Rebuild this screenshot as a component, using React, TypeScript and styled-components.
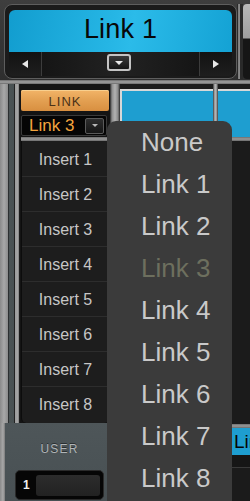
import React from "react";
import styled, { createGlobalStyle } from "styled-components";

const Global = createGlobalStyle`
  html, body { margin: 0; padding: 0; background: #2a2a2a; }
  body { font-family: "Liberation Sans", Arial, sans-serif; }
  * { box-sizing: border-box; }
`;

const Screen = styled.div`
  position: relative;
  width: 250px;
  height: 501px;
  overflow: hidden;
  background: #2a2a2a;
  display: flex;
  flex-direction: column;
`;

const Header = styled.div`
  height: 80px;
  flex: none;
  display: flex;
  padding: 4px 0 0 4px;
  background: linear-gradient(#3e3e3e, #2e2e2e);
`;

const DisplayFrame = styled.div`
  width: 233px;
  height: 75px;
  border: 1px solid #5e5e5e;
  border-radius: 8px;
  background: #1b1b1b;
  padding: 5px 4px 2px 4px;
  display: flex;
  flex-direction: column;
`;

const Lcd = styled.div`
  height: 42px;
  border-radius: 6px 6px 0 0;
  background: linear-gradient(100deg, #129dcf 0%, #25b5e4 45%, #2bbbe9 55%, #14a2d4 100%);
  display: flex;
  align-items: center;
  justify-content: center;
  padding-bottom: 4px;
  font-size: 27px;
  color: #080808;
  letter-spacing: 0.2px;
`;

const NavBar = styled.div`
  height: 24px;
  display: flex;
  background: linear-gradient(#121212, #1e1e1e);
  border-radius: 0 0 4px 4px;
`;

const NavSide = styled.div`
  width: 32px;
  display: flex;
  align-items: center;
  justify-content: center;
`;

const NavCenter = styled.div`
  flex: 1;
  border-left: 1px solid #3c3c3c;
  border-right: 1px solid #3c3c3c;
  display: flex;
  align-items: flex-start;
  justify-content: center;
  padding-top: 2px;
  padding-right: 4px;
  background: linear-gradient(90deg, #151515, #222 50%, #151515);
`;

const Tri = styled.div<{ $dir: "left" | "right" | "down"; $size?: number; $color?: string }>`
  width: 0;
  height: 0;
  ${({ $dir, $size = 4, $color = "#e8e8e8" }) =>
    $dir === "left"
      ? `border-top: ${$size}px solid transparent; border-bottom: ${$size}px solid transparent; border-right: ${$size + 2}px solid ${$color};`
      : $dir === "right"
      ? `border-top: ${$size}px solid transparent; border-bottom: ${$size}px solid transparent; border-left: ${$size + 2}px solid ${$color};`
      : `border-left: ${$size}px solid transparent; border-right: ${$size}px solid transparent; border-top: ${$size}px solid ${$color};`}
`;

const MenuButton = styled.div`
  width: 24px;
  height: 17px;
  border: 2px solid #c4c4c4;
  border-radius: 3px;
  background: linear-gradient(#3a3a3a, #161616);
  display: flex;
  align-items: center;
  justify-content: center;
  padding-top: 1px;
`;

const HeaderSep = styled.div`
  width: 6px;
  height: 75px;
  background: linear-gradient(90deg, #2a2a2a 0, #2a2a2a 1px, #7a7a7a 1px, #8c8c8c 3px, #2a2a2a 3px);
`;

const Peek = styled.div`
  flex: 1;
  height: 75px;
  border-radius: 4px 0 0 4px;
  background: linear-gradient(#b8b8b8 0, #9e9e9e 34px, #161616 35px, #161616 100%);
`;

const Rule = styled.div`
  height: 4px;
  flex: none;
  background: linear-gradient(#6a6a6a, #a2a2a2 50%, #6a6a6a);
`;

const Body = styled.div`
  flex: 1;
  display: flex;
  min-height: 0;
`;

const LeftSide = styled.div`
  width: 110px;
  display: flex;
  flex-direction: column;
`;

const UpperLeft = styled.div`
  height: 339px;
  display: flex;
`;

const Rail = styled.div`
  width: 20px;
  background: linear-gradient(
    90deg,
    #8a8a8a 0,
    #a8a8a8 4px,
    #8c8c8c 8px,
    #2c2f30 8px,
    #2c2f30 9px,
    #4b5354 9px,
    #485052 14px,
    #222 14px,
    #222 15px,
    #9a9a9a 15px,
    #a6a6a6 18px,
    #6e6e6e 19px,
    #1a1a1a 19px
  );
`;

const Strip = styled.div`
  width: 90px;
  background: #141414;
  padding: 6px 0 0 1px;
  display: flex;
  flex-direction: column;
`;

const LinkButton = styled.div`
  width: 88px;
  height: 21px;
  border-radius: 2px;
  background: linear-gradient(#f2b468, #e3a052 50%, #d88f40);
  box-shadow: inset 0 1px 0 #f8cf8e;
  display: flex;
  align-items: center;
  justify-content: center;
  font-size: 13px;
  letter-spacing: 1px;
  color: #4a3218;
  padding-top: 1px;
`;

const LinkSelect = styled.div`
  margin-top: 4px;
  width: 86px;
  height: 21px;
  border: 1px solid #3a3a3a;
  border-radius: 2px;
  background: #050505;
  display: flex;
  align-items: center;
  justify-content: space-between;
  padding: 0 2px 0 7px;
  font-size: 17px;
  color: #f3a43e;
`;

const SmallDrop = styled.div`
  width: 19px;
  height: 16px;
  border: 1px solid #5a5a5a;
  border-radius: 2px;
  background: linear-gradient(#2e2e2e, #161616);
  display: flex;
  align-items: center;
  justify-content: center;
`;

const GrayBar = styled.div`
  margin-top: 1px;
  height: 4px;
  width: 89px;
  background: linear-gradient(#6e6e6e, #9a9a9a 50%, #6a6a6a);
`;

const InsertList = styled.div`
  flex: 1;
  width: 88px;
  background: #1d1d1d;
  border-radius: 0 0 5px 5px;
  border-left: 1px solid #0c0c0c;
  padding-top: 1px;
  display: flex;
  flex-direction: column;
`;

const InsertRow = styled.div`
  height: 35px;
  flex: none;
  border-bottom: 1px solid #2d2d2d;
  display: flex;
  align-items: center;
  justify-content: center;
  padding-top: 1px;
  font-size: 16px;
  color: #c6c6c6;
  &:last-child { border-bottom: none; }
`;

const BottomPanel = styled.div`
  flex: 1;
  display: flex;
`;

const RailStub = styled.div`
  width: 5px;
  background: linear-gradient(90deg, #8a8a8a, #a8a8a8 60%, #7a7a7a);
`;

const UserPanel = styled.div`
  flex: 1;
  background: linear-gradient(#4e5659, #485053);
  display: flex;
  flex-direction: column;
  align-items: flex-start;
  padding: 19px 0 0 10px;
`;

const UserLabel = styled.div`
  width: 89px;
  text-align: center;
  font-size: 12px;
  letter-spacing: 1.2px;
  color: #b0b5b8;
  text-shadow: 0 -1px 0 #2a2f31;
`;

const UserBox = styled.div`
  margin-top: 14px;
  width: 89px;
  height: 30px;
  border-radius: 5px;
  background: #060606;
  border: 1px solid #2a2a2a;
  display: flex;
  align-items: center;
  padding: 0 3px 0 7px;
  gap: 6px;
`;

const UserNum = styled.span`
  font-size: 12px;
  font-weight: bold;
  color: #f0f0f0;
`;

const UserField = styled.div`
  flex: 1;
  height: 21px;
  border-radius: 3px;
  background: linear-gradient(#2c2c2c, #222);
`;

const VBar = styled.div<{ $w: number }>`
  width: ${({ $w }) => $w}px;
  flex: none;
  background: linear-gradient(90deg, #2a2a2a 0, #8e8e8e 20%, #b2b2b2 50%, #8a8a8a 80%, #2a2a2a 100%);
`;

const Channel = styled.div<{ $w: number }>`
  width: ${({ $w }) => $w}px;
  flex: none;
  display: flex;
  flex-direction: column;
  background: #1b1b1b;
  padding-top: 5px;
`;

const ChannelBlue = styled.div`
  height: 48px;
  background: #1e9ed0;
  border-top: 2px solid #d8d8d8;
  border-left: 2px solid #d8d8d8;
`;

const ChannelBlueWide = styled(ChannelBlue)`
  border-left: none;
`;

const ChannelList = styled.div`
  height: 283px;
  background: #1b1b1b;
`;

const ChannelRule = styled.div`
  height: 4px;
  background: linear-gradient(#6e6e6e, #9a9a9a 50%, #6a6a6a);
`;

const ChannelLabel = styled.div`
  height: 27px;
  background: #1e9ed0;
  display: flex;
  align-items: center;
  padding-left: 16px;
  font-size: 19px;
  color: #050505;
  white-space: nowrap;
  overflow: hidden;
`;

const ChannelFoot = styled.div`
  height: 13px;
  background: #161616;
  border-bottom: 1px solid #3a3a3a;
`;

const Menu = styled.div`
  position: absolute;
  left: 107px;
  top: 121px;
  width: 125px;
  height: 400px;
  background: #3b3b3b;
  border-radius: 9px 9px 0 0;
  display: flex;
  flex-direction: column;
`;

const MenuItem = styled.div<{ $disabled?: boolean }>`
  height: 42px;
  flex: none;
  display: flex;
  align-items: center;
  padding-left: 34px;
  font-size: 26px;
  color: ${({ $disabled }) => ($disabled ? "#6d6f5e" : "#c9c9c9")};
`;

const inserts = [1, 2, 3, 4, 5, 6, 7, 8];
const menuItems = ["None", "Link 1", "Link 2", "Link 3", "Link 4", "Link 5", "Link 6", "Link 7", "Link 8"];

export default function App() {
  return (
    <>
      <Global />
      <Screen>
        <Header>
          <DisplayFrame>
            <Lcd>Link 1</Lcd>
            <NavBar>
              <NavSide>
                <Tri $dir="left" />
              </NavSide>
              <NavCenter>
                <MenuButton>
                  <Tri $dir="down" $size={4} />
                </MenuButton>
              </NavCenter>
              <NavSide>
                <Tri $dir="right" />
              </NavSide>
            </NavBar>
          </DisplayFrame>
          <HeaderSep />
          <Peek />
        </Header>
        <Rule />
        <Body>
          <LeftSide>
            <UpperLeft>
              <Rail />
              <Strip>
                <LinkButton>LINK</LinkButton>
                <LinkSelect>
                  <span>Link 3</span>
                  <SmallDrop>
                    <Tri $dir="down" $size={3} $color="#b8b8b8" />
                  </SmallDrop>
                </LinkSelect>
                <GrayBar />
                <InsertList>
                  {inserts.map((n) => (
                    <InsertRow key={n}>Insert {n}</InsertRow>
                  ))}
                </InsertList>
              </Strip>
            </UpperLeft>
            <BottomPanel>
              <RailStub />
              <UserPanel>
                <UserLabel>USER</UserLabel>
                <UserBox>
                  <UserNum>1</UserNum>
                  <UserField />
                </UserBox>
              </UserPanel>
            </BottomPanel>
          </LeftSide>
          <VBar $w={10} />
          <Channel $w={93}>
            <ChannelBlue />
          </Channel>
          <VBar $w={5} />
          <Channel $w={32}>
            <ChannelBlueWide />
            <ChannelRule />
            <ChannelList />
            <ChannelRule />
            <ChannelLabel>Link 1</ChannelLabel>
            <ChannelFoot />
          </Channel>
        </Body>
        <Menu>
          {menuItems.map((m) => (
            <MenuItem key={m} $disabled={m === "Link 3"}>
              {m}
            </MenuItem>
          ))}
        </Menu>
      </Screen>
    </>
  );
}
